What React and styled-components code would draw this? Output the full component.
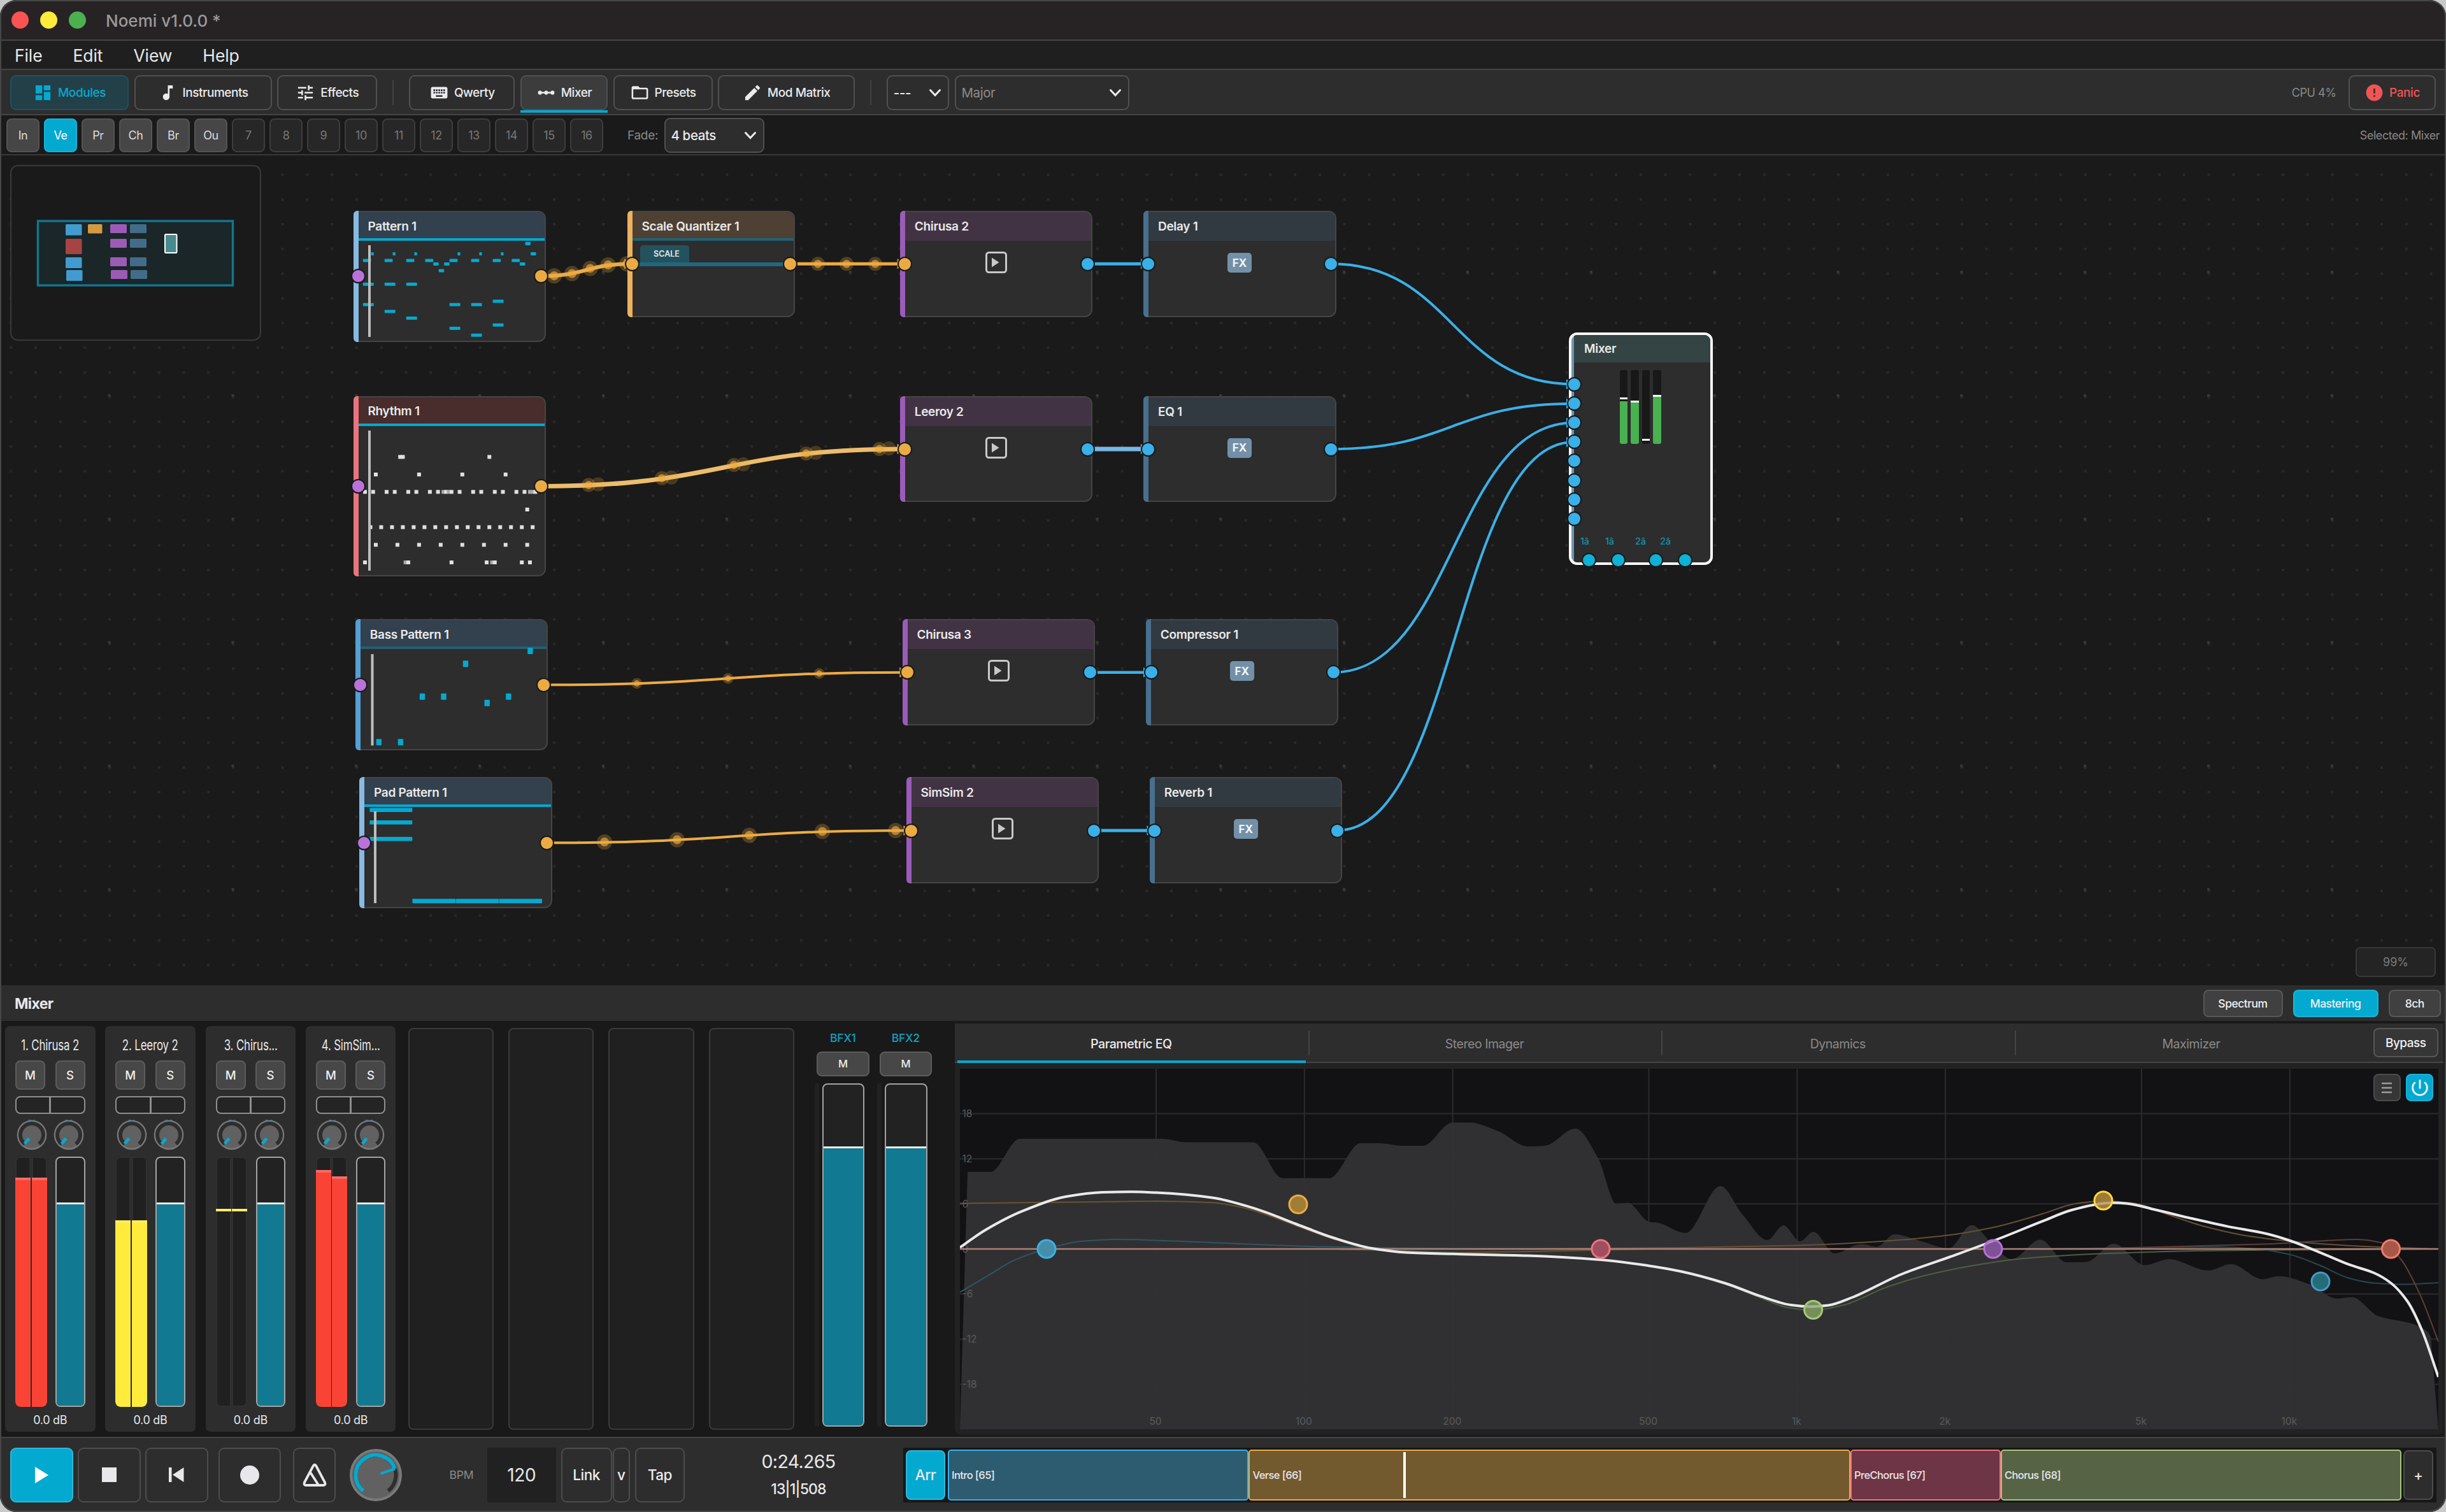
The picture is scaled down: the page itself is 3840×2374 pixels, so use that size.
import styled, { createGlobalStyle } from 'styled-components';
import {
  MdDashboard,
  MdMusicNote,
  MdTune,
  MdKeyboard,
  MdLinearScale,
  MdFolderOpen,
  MdEdit,
  MdError,
  MdPowerSettingsNew,
} from 'react-icons/md';

const GlobalStyle = createGlobalStyle`
  * { box-sizing: border-box; }
  body {
    margin: 0;
    background: #c9c9c9;
    color: #e8e8ea;
    font-family: Inter, 'Liberation Sans', sans-serif;
    overflow: hidden;
  }
  button { font-family: inherit; color: inherit; padding: 0; }
  svg { display: block; flex: none; }
`;

const accent = '#04a9d0';
const blue = '#3ab0e8';
const orange = '#ecab42';
const line = '#444445';

/* ---------- window chrome ---------- */

const Window = styled.div`
  position: relative;
  display: flex;
  flex-direction: column;
  width: 3840px;
  height: 2374px;
  background: #1a1a1a;
  border-radius: 26px;
  overflow: hidden;

  &::after {
    content: '';
    position: absolute;
    inset: 0;
    border: 2px solid #474747;
    border-radius: 26px;
    pointer-events: none;
  }
`;

const TitleBar = styled.div`
  display: flex;
  align-items: center;
  height: 64px;
  padding-left: 18px;
  background: #272324;
  border-bottom: 2px solid #464445;
`;

const Light = styled.span`
  width: 27px;
  height: 27px;
  margin-right: 18px;
  border-radius: 50%;
  background: ${({ $color }) => $color};
`;

const AppTitle = styled.span`
  margin: 2px 0 0 13px;
  font-size: 26px;
  font-weight: 500;
  color: #9a989a;
`;

const MenuBar = styled.div`
  display: flex;
  align-items: center;
  gap: 48px;
  height: 46px;
  padding: 2px 0 0 23px;
  background: #1f1f1f;
  border-bottom: 2px solid ${line};
  font-size: 26.5px;
  letter-spacing: -0.1px;
`;

const Toolbar = styled.div`
  display: flex;
  align-items: center;
  gap: 8.6px;
  height: 71px;
  padding: 2px 16px 0;
  background: #2d2d2d;
  border-bottom: 2px solid ${line};
`;

const ToolButton = styled.button`
  position: relative;
  display: flex;
  align-items: center;
  justify-content: center;
  gap: 8px;
  width: ${({ $w }) => $w}px;
  height: 55px;
  border: 2px solid ${({ $tone }) => ($tone === 'accent' ? '#1f5260' : '#505050')};
  border-radius: 9px;
  background: ${({ $tone }) => ($tone === 'accent' ? '#233f47' : $tone === 'on' ? '#3c3c3c' : '#2d2d2d')};
  color: ${({ $tone }) => ($tone === 'accent' ? accent : $tone === 'danger' ? '#f25454' : '#ebebed')};
  font-size: 19px;
  font-weight: 500;
  letter-spacing: -0.45px;

  svg {
    width: 31px;
    height: 31px;
  }

  &::after {
    content: '';
    display: ${({ $tone }) => ($tone === 'on' ? 'block' : 'none')};
    position: absolute;
    left: -2px;
    right: -2px;
    bottom: -6px;
    height: 4px;
    background: ${accent};
  }
`;

const Divider = styled.span`
  width: 2px;
  height: 39px;
  margin: 0 15.5px;
  background: #424242;
`;

const Select = styled.div`
  display: flex;
  align-items: center;
  justify-content: space-between;
  width: ${({ $w }) => $w}px;
  height: 55px;
  padding: 0 10px 0 8.5px;
  border: 2px solid #505050;
  border-radius: 9px;
  background: #2d2d2d;
  color: ${({ $muted }) => ($muted ? '#8b8b8b' : '#ebebed')};
  font-size: 20.5px;
  font-weight: ${({ $muted }) => ($muted ? 400 : 500)};
  letter-spacing: -0.4px;
`;

const Status = styled.span`
  margin-left: auto;
  margin-right: ${({ $mr }) => $mr || 0}px;
  font-size: 18px;
  letter-spacing: -0.45px;
  color: #898989;
`;

const SceneBar = styled.div`
  display: flex;
  align-items: center;
  gap: 7px;
  height: 63px;
  padding: 2px 10px 0;
  background: #1a1a1a;
  border-bottom: 2px solid #383838;
`;

const SceneButton = styled.button`
  width: 52px;
  height: 53px;
  border: 2px solid ${({ $state }) => ($state === 'active' ? '#18b4da' : $state === 'used' ? '#545454' : '#3d3d3d')};
  border-radius: 8px;
  background: ${({ $state }) => ($state === 'active' ? accent : $state === 'used' ? '#464646' : '#272727')};
  color: ${({ $state }) => ($state === 'active' ? '#fff' : $state === 'used' ? '#dcdcdc' : '#777')};
  font-size: 18px;
  letter-spacing: -0.4px;
`;

const FadeLabel = styled.span`
  width: 51px;
  margin-left: 31px;
  font-size: 19px;
  letter-spacing: -0.3px;
  color: #898989;
`;

const Chevron = () => (
  <svg width='20' height='14' viewBox='0 0 20 14'>
    <path d='M2.5 2.5 10 10.5 17.5 2.5' fill='none' stroke='#ebebed' strokeWidth='3' strokeLinecap='round' />
  </svg>
);

/* ---------- patch canvas ---------- */

const Canvas = styled.div`
  position: relative;
  height: 1303px;
  overflow: hidden;
  background: #1a1a1a;
`;

// node coordinates are window coordinates, the canvas starts below the bars
const World = styled.div`
  position: absolute;
  left: 0;
  top: -244px;
  width: 3840px;
  height: 1547px;
`;

const Wires = styled.svg`
  position: absolute;
  inset: 0;
`;

const NodeBox = styled.div`
  position: absolute;
  left: ${({ $x }) => $x}px;
  top: ${({ $y }) => $y}px;
  width: ${({ $w }) => $w}px;
  height: ${({ $h }) => $h}px;
  border: 2px solid #454545;
  border-left: 0;
  border-radius: 6px 12px 12px 6px;
  background: #2d2d2d;
  overflow: hidden;
`;

const NodeHeader = styled.div`
  display: flex;
  align-items: center;
  height: 45px;
  padding: ${({ $rule }) => ($rule ? 3 : 0)}px 0 0 23px;
  background: ${({ $bg }) => $bg};
  border-bottom: ${({ $rule }) => ($rule ? `4px solid ${$rule}` : '0')};
  font-size: 19px;
  font-weight: 600;
  letter-spacing: -0.3px;
  color: #eaeaea;
  white-space: nowrap;
`;

const Stripe = styled.span`
  position: absolute;
  left: ${({ $x }) => $x}px;
  top: ${({ $y }) => $y}px;
  width: 8px;
  height: ${({ $h }) => $h}px;
  border-radius: 6px 0 0 6px;
  background: ${({ $color }) => $color};
`;

const NodeBody = styled.div`
  display: flex;
  justify-content: center;
  padding: ${({ $pad }) => $pad || 18}px 0 0 1.5px;
`;

const FxBadge = styled.span`
  display: flex;
  align-items: center;
  justify-content: center;
  width: 38px;
  height: 31px;
  margin-top: 1px;
  border-radius: 5px;
  background: #7291a8;
  color: #f2f5f7;
  font-size: 17px;
  font-weight: 700;
`;

const Port = styled.span`
  position: absolute;
  left: ${({ $x }) => $x - 11.5}px;
  top: ${({ $y }) => $y - 11.5}px;
  width: 23px;
  height: 23px;
  border: 2px solid #171a1b;
  border-radius: 50%;
  background: ${({ $color }) => $color};
`;

const NotesLayer = styled.svg`
  position: absolute;
  inset: 0;
`;

const ScaleBadge = styled.span`
  display: flex;
  align-items: center;
  justify-content: center;
  width: 77px;
  height: 27px;
  margin: 7px 0 0 20px;
  padding-left: 7px;
  border-radius: 5px 5px 0 0;
  background: #24515e;
  color: #e3eaec;
  font-size: 12.5px;
  font-weight: 600;
`;

const ScaleBar = styled.span`
  display: block;
  width: 232px;
  height: 6px;
  margin-left: 15px;
  background: #1f6980;
`;

const MixerBox = styled.div`
  position: absolute;
  left: 2463px;
  top: 522px;
  width: 226px;
  height: 365px;
  border: 4px solid #fafafa;
  border-radius: 13px;
  background: linear-gradient(90deg, #6f98b3 4px, #2d2d2d 4px);
  overflow: hidden;
`;

const MixerHead = styled.div`
  display: flex;
  align-items: center;
  height: 43px;
  margin-left: 4px;
  padding-left: 16px;
  background: #344444;
  color: #eaeaea;
  font-size: 19px;
  font-weight: 600;
  letter-spacing: -0.3px;
`;

const MiniMeters = styled.div`
  display: flex;
  gap: 5.2px;
  margin: 12px 0 0 76px;
`;

const MiniMeter = styled.span`
  position: relative;
  width: 12.3px;
  height: 116px;
  border-radius: 3px;
  background: linear-gradient(0deg, #48b150 ${({ $level }) => $level}px, #181818 ${({ $level }) => $level}px);

  &::after {
    content: '';
    position: absolute;
    left: 0;
    right: 0;
    bottom: ${({ $peak }) => $peak}px;
    height: 3px;
    background: #fafafa;
  }
`;

const OutLabels = styled.div`
  position: absolute;
  left: 14px;
  bottom: 25px;
  display: grid;
  grid-template-columns: 39px 47px 39px 40px;
  color: #1492af;
  font-size: 14.5px;
  font-weight: 500;
  letter-spacing: -0.3px;
`;

const MiniMap = styled.div`
  position: absolute;
  left: 16px;
  top: 259px;
  display: flex;
  align-items: center;
  justify-content: center;
  width: 394px;
  height: 276px;
  border: 2px solid #393939;
  border-radius: 12px;
  background: #1a1a1a;
`;

const ZoomBadge = styled.div`
  position: absolute;
  left: 3698px;
  top: 1487px;
  width: 126px;
  height: 47px;
  border: 2px solid #383838;
  border-radius: 7px;
  background: #242424;
  color: #7c7c7c;
  font-size: 18px;
  line-height: 44px;
  text-align: center;
`;

const STEP = 8.49;

// [16th step, row from the top, length]
const PATTERN_NOTES = [
  [30, 0, 1], [1.5, 3, 0.5], [5.5, 3, 0.5], [9.5, 3, 0.5], [17.5, 3, 0.5], [21.5, 3, 0.5], [25.5, 3, 0.5], [31, 3, 1],
  [0, 5, 1.5], [4, 5, 1.5], [8, 5, 1.5], [11.5, 5, 1.5], [16, 5, 1.5], [20, 5, 1.5], [24, 5, 1.5], [27.5, 5, 1.5],
  [13, 6, 1], [15, 6, 1], [29, 6, 1], [14, 8, 1],
  [0, 12, 2], [4, 12, 2], [8, 12, 2], [24, 17, 2], [0, 18, 2], [16, 18, 2], [20, 18, 2],
  [4, 20, 2], [8, 22, 2], [24, 24, 2], [16, 25, 2], [20, 27, 2],
];

const RHYTHM_ROWS = [
  [717.4, [6.5, 7, 23]],
  [745, [2, 10, 18, 26]],
  [772.3, [0, 1.5, 4, 5.5, 8, 9.5, 12, 13.5, 14.5, 15, 15.5, 16, 17.5, 20, 21.5, 24, 25.5, 28, 29.5, 30.5, 31, 31.5]],
  [800, [30]],
  [827.7, [1, 3, 5, 7, 9, 11, 13, 15, 17, 19, 21, 23, 25, 27, 29, 31]],
  [855.4, [2, 6, 10, 14, 18, 22, 26, 30]],
  [883, [0, 7.5, 8, 16, 22.5, 23.5, 24, 29, 30.5]],
];

const DIM_HITS = ['883-7.5', '883-23.5', '772.3-14.5', '772.3-15.5', '772.3-30.5', '772.3-31'];

const BASS_NOTES = [
  [832.4, 1022], [731, 1042.3], [663, 1093.7], [696.5, 1093.7], [798.3, 1093.7],
  [764.7, 1103.8], [594.8, 1165.3], [628.9, 1165.3],
];

const MODULES = [
  { title: 'Pattern 1', kind: 'pattern', x: 554.5, y: 331, w: 302.5, h: 205.5, stripe: '#86bae2', head: '#33404e', rule: accent },
  { title: 'Rhythm 1', kind: 'pattern', x: 554.5, y: 621.5, w: 302.5, h: 283, stripe: '#ea747e', head: '#482d2c', rule: accent },
  { title: 'Bass Pattern 1', kind: 'pattern', x: 557.8, y: 972.3, w: 302.5, h: 205.5, stripe: '#55a0d6', head: '#33404e', rule: '#236073' },
  { title: 'Pad Pattern 1', kind: 'pattern', x: 564, y: 1220, w: 302.5, h: 205.5, stripe: '#86bae2', head: '#33404e', rule: accent },
  { title: 'Scale Quantizer 1', kind: 'scale', x: 984.5, y: 331, w: 263.5, h: 166.5, stripe: '#ecb25e', head: '#4e4033', rule: '#1c6478' },
  { title: 'Chirusa 2', kind: 'synth', x: 1412.7, y: 331 },
  { title: 'Leeroy 2', kind: 'synth', x: 1412.7, y: 621.5 },
  { title: 'Chirusa 3', kind: 'synth', x: 1416.5, y: 972.3 },
  { title: 'SimSim 2', kind: 'synth', x: 1422.5, y: 1220 },
  { title: 'Delay 1', kind: 'fx', x: 1795, y: 331 },
  { title: 'EQ 1', kind: 'fx', x: 1795, y: 621.5 },
  { title: 'Compressor 1', kind: 'fx', x: 1798.8, y: 972.3 },
  { title: 'Reverb 1', kind: 'fx', x: 1804.8, y: 1220 },
];

const KIND_STYLE = {
  synth: { w: 302.5, h: 166.5, stripe: '#9a5cb8', head: '#423344' },
  fx: { w: 302.5, h: 166.5, stripe: '#48708e', head: '#323a41' },
};

const wire = ([x1, y1], [x2, y2]) => {
  const mid = (x1 + x2) / 2;
  return `M${x1} ${y1}C${mid} ${y1} ${mid} ${y2} ${x2} ${y2}`;
};

const WIRES = [
  { from: [849, 433.5], to: [992.5, 414.3], color: orange, width: 6, dots: [[870, 433], [898, 429.5], [926.5, 421.4], [954.6, 416], [984, 414.3]], r: 12 },
  { from: [1240.7, 414.3], to: [1420.7, 414.3], color: orange, width: 5, dots: [[1284, 414.3], [1329, 414.3], [1374, 414.3]], r: 11 },
  { from: [849, 763.4], to: [1420.7, 705], color: '#edbd6c', width: 7, dots: [[924, 761.5], [1039, 750.8], [1152, 730], [1265.6, 712], [1380.5, 705]], r: 11, echo: true },
  { from: [853, 1075.3], to: [1424.5, 1055.7], color: orange, width: 4, dots: [[999.8, 1073], [1143, 1065.3], [1286, 1057.5]], r: 8.5 },
  { from: [858.7, 1323.3], to: [1430.5, 1304], color: orange, width: 4, dots: [[949, 1322], [1063, 1318.5], [1176.4, 1311.4], [1291, 1305.5], [1406, 1304]], r: 12 },
  { from: [1707.6, 414.3], to: [1803, 414.3], color: blue, width: 5 },
  { from: [1707.6, 705], to: [1803, 705], color: '#77b6e4', width: 7 },
  { from: [1711.6, 1055.7], to: [1807, 1055.7], color: blue, width: 4.5 },
  { from: [1717.5, 1304], to: [1812.5, 1304], color: blue, width: 5 },
  { from: [2089.5, 414.3], to: [2471, 603.3], color: blue, width: 4 },
  { from: [2089.5, 705], to: [2471, 633.7], color: blue, width: 4 },
  { from: [2093, 1055.7], to: [2471, 663.7], color: blue, width: 4 },
  { from: [2099, 1304], to: [2471, 694], color: blue, width: 4 },
];

const PURPLE = '#ba72d8';

const PORTS = [
  [562, 433.5, PURPLE], [562, 763.4, PURPLE], [565.8, 1075.3, PURPLE], [571.5, 1323.3, PURPLE],
  [849, 433.5, orange], [849, 763.4, orange], [853, 1075.3, orange], [858.7, 1323.3, orange],
  [992.4, 414.3, orange], [1240.7, 414.3, orange],
  [1420.7, 414.3, orange], [1420.7, 705, orange], [1424.5, 1055.7, orange], [1430.5, 1304, orange],
  [1707.6, 414.3, blue], [1707.6, 705, blue], [1711.6, 1055.7, blue], [1717.5, 1304, blue],
  [1802.5, 414.3, blue], [1802.5, 705, blue], [1807, 1055.7, blue], [1812.5, 1304, blue],
  [2089.3, 414.3, blue], [2089.3, 705, blue], [2093, 1055.7, blue], [2099, 1304, blue],
  ...[0, 1, 2, 3, 4, 5, 6, 7].map((i) => [2471, 603.3 + i * 30.15, blue]),
  [2494.3, 879.3, '#0fb1d6'], [2540.7, 879.3, '#0fb1d6'], [2599, 879.3, '#0fb1d6'], [2645.3, 879.3, '#0fb1d6'],
];

const PlayBox = () => (
  <svg width='34' height='34' viewBox='0 0 34 34'>
    <rect x='1.5' y='1.5' width='31' height='31' rx='4' fill='none' stroke='#c8c8c8' strokeWidth='3' />
    <path d='M10 9.5 21.5 17 10 24.5z' fill='#c8c8c8' />
  </svg>
);

const ModuleNode = ({ module }) => {
  const { title, kind, x, y, w, h, stripe, head, rule } = { ...KIND_STYLE[module.kind], ...module };
  return (
    <>
      <NodeBox $x={x} $y={y} $w={w} $h={h}>
        <NodeHeader $bg={head} $rule={rule}>{title}</NodeHeader>
        {kind === 'synth' && (
          <NodeBody $pad={17}>
            <PlayBox />
          </NodeBody>
        )}
        {kind === 'fx' && (
          <NodeBody>
            <FxBadge>FX</FxBadge>
          </NodeBody>
        )}
        {kind === 'scale' && (
          <>
            <ScaleBadge>SCALE</ScaleBadge>
            <ScaleBar />
          </>
        )}
      </NodeBox>
      <Stripe $x={x} $y={y} $h={h} $color={stripe} />
    </>
  );
};

const PatternNotes = () => (
  <NotesLayer width='3840' height='1547'>
    <g fill={accent}>
      {PATTERN_NOTES.map(([s, row, len]) => (
        <rect key={`${s}-${row}`} x={569.8 + s * STEP} y={380 + row * 5.32} width={len * STEP} height='5' rx='1' />
      ))}
      {BASS_NOTES.map(([cx, cy]) => (
        <rect key={cx} x={cx - 4.2} y={cy - 5} width='8.4' height='10' rx='1' />
      ))}
      <rect x='580.3' y='1268.5' width='67' height='6.5' rx='1' />
      <rect x='580.3' y='1288' width='67' height='6.5' rx='1' />
      <rect x='580.3' y='1314' width='67' height='6.5' rx='1' />
      {[647.5, 715.5, 783.5].map((nx) => (
        <rect key={nx} x={nx} y='1411.3' width='67.5' height='7' rx='1' />
      ))}
    </g>
    {RHYTHM_ROWS.map(([y, steps]) =>
      steps.map((s) => (
        <rect
          key={`${y}-${s}`}
          x={570 + s * STEP}
          y={y - 3}
          width='6'
          height='6'
          fill={DIM_HITS.includes(`${y}-${s}`) ? '#a8a8a8' : '#e0e0e0'}
        />
      ))
    )}
    <g fill='#bdbdbd'>
      <rect x='578' y='385' width='4' height='144' />
      <rect x='578' y='676' width='4' height='220' />
      <rect x='582.5' y='1027' width='4' height='143.5' />
      <rect x='587' y='1274' width='4' height='144' />
    </g>
  </NotesLayer>
);

const MAP_BLOCKS = [
  [103, 352, 25.5, 17.5, '#429bd0'], [138, 352, 22.5, 14.5, '#d39a42'], [173, 352, 26, 14, '#9c5bb4'], [204, 352, 26, 14, '#426c8a'],
  [103, 375, 25.5, 24, '#a64444'], [173, 375, 26, 14, '#9c5bb4'], [204, 375, 26, 14, '#426c8a'],
  [103, 404, 25.5, 17, '#429bd0'], [173, 404, 26, 14, '#9c5bb4'], [204, 404, 26, 14, '#426c8a'],
  [104, 424, 25.5, 17, '#429bd0'], [174, 424, 26, 14, '#9c5bb4'], [205, 424, 26, 14, '#426c8a'],
];

const PatchCanvas = () => (
  <Canvas>
    <World>
      <Wires width='3840' height='1547'>
        <defs>
          <pattern id='dots' x='15.1' y='1.1' width='38.77' height='38.77' patternUnits='userSpaceOnUse'>
            <rect width='4' height='4' fill='#292929' />
          </pattern>
          <pattern id='majorDots' x='169.6' y='37.4' width='193.85' height='193.85' patternUnits='userSpaceOnUse'>
            <rect width='4' height='4' fill='#383838' />
          </pattern>
        </defs>
        <rect y='244' width='3840' height='1303' fill='url(#dots)' />
        <rect y='244' width='3840' height='1303' fill='url(#majorDots)' />
        {WIRES.map(({ from, to, color, width, dots = [], r, echo }) => (
          <g key={`${from}`}>
            <path d={wire(from, to)} fill='none' stroke={color} strokeWidth={width} />
            <path d={`M${to[0] - 12} ${to[1] - 8}v16l12 -8z`} fill={color} />
            {dots.map(([cx, cy]) => (
              <g key={cx} fill={orange}>
                {echo && <circle cx={cx + 15} cy={cy - 1} r={r} fillOpacity='0.22' />}
                <circle cx={cx} cy={cy} r={r} fillOpacity='0.27' />
                <circle cx={cx} cy={cy} r={r * 0.58} fillOpacity='0.65' />
              </g>
            ))}
          </g>
        ))}
      </Wires>
      {MODULES.map((m) => (
        <ModuleNode key={m.title} module={m} />
      ))}
      <PatternNotes />
      <MixerBox>
        <MixerHead>Mixer</MixerHead>
        <MiniMeters>
          <MiniMeter $level={67.5} $peak={70.5} />
          <MiniMeter $level={65} $peak={65} />
          <MiniMeter $level={0} $peak={5} />
          <MiniMeter $level={74} $peak={74} />
        </MiniMeters>
        <OutLabels>
          <span>1â</span>
          <span>1â</span>
          <span>2â</span>
          <span>2â</span>
        </OutLabels>
      </MixerBox>
      {PORTS.map(([x, y, color]) => (
        <Port key={`${x}-${y}`} $x={x} $y={y} $color={color} />
      ))}
      <MiniMap>
        <svg width='390' height='272' viewBox='18 261 390 272'>
          <rect x='59.5' y='347' width='306' height='101' fill='#1a2628' stroke='#14758c' strokeWidth='3.5' />
          {MAP_BLOCKS.map(([x, y, w, h, fill]) => (
            <rect key={`${x}-${y}`} x={x} y={y} width={w} height={h} rx='1.5' fill={fill} />
          ))}
          <rect x='259' y='368' width='18.5' height='29' rx='1.5' fill='#478b90' stroke='#fff' strokeWidth='2' />
        </svg>
      </MiniMap>
      <ZoomBadge>99%</ZoomBadge>
    </World>
  </Canvas>
);

/* ---------- mixer panel ---------- */

const MixerBar = styled.div`
  display: flex;
  align-items: center;
  gap: 16px;
  height: 56px;
  padding: 1px 8px 0 23px;
  background: #2d2d2d;
`;

const PanelTitle = styled.span`
  margin-right: auto;
  font-size: 23px;
  font-weight: 700;
  letter-spacing: -0.6px;
`;

const PanelButton = styled.button`
  width: ${({ $w }) => $w}px;
  height: ${({ $h }) => $h || 43}px;
  margin-left: ${({ $ml }) => $ml || 0}px;
  border: 2px solid ${({ $active }) => ($active ? '#1cb4d8' : '#575757')};
  border-radius: 8px;
  background: ${({ $active, $dark }) => ($active ? accent : $dark ? '#363636' : '#404040')};
  color: #f0f0f0;
  font-size: ${({ $size }) => $size || 17.5}px;
  font-weight: 500;
  letter-spacing: -0.5px;
`;

const MixerArea = styled.div`
  display: flex;
  height: 653px;
  padding: 4px 4px 0 8px;
  background: #191919;
`;

const Strips = styled.div`
  display: flex;
  gap: 15.8px;
  padding-top: 4px;
`;

const Strip = styled.div`
  width: 141.5px;
  height: 637px;
  padding: 0 16px;
  border-radius: 7px;
  background: #2d2d2d;
`;

const EmptyStrip = styled.div`
  width: 134.5px;
  height: 631px;
  margin: 3px 3.5px;
  border: 2px solid #3a3a3a;
  border-radius: 8px;
  background: #202020;
`;

const StripName = styled.div`
  display: flex;
  align-items: center;
  justify-content: center;
  height: 53.5px;
  padding-top: 5px;
  font-size: 22.5px;
  letter-spacing: -0.2px;
  white-space: nowrap;
  transform: scaleX(0.75);
`;

const StripButtons = styled.div`
  display: flex;
  justify-content: space-between;
`;

const StripButton = styled.button`
  width: ${({ $w }) => $w || 47}px;
  height: ${({ $h }) => $h || 46.5}px;
  border: 2px solid #5c5c5c;
  border-radius: 8px;
  background: #474747;
  color: #eee;
  font-size: ${({ $size }) => $size || 18.5}px;
  font-weight: 500;
`;

const Pan = styled.div`
  display: flex;
  justify-content: center;
  height: 27.5px;
  margin-top: 10px;
  border: 2px solid #8e8e8e;
  border-radius: 8px;
  background: #242424;

  &::after {
    content: '';
    width: 3px;
    background: #8e8e8e;
  }
`;

const Sends = styled.div`
  display: flex;
  gap: 10.5px;
  height: 67.5px;
  padding: 9.5px 0 0 1.5px;
`;

// the knob sits on top of its label, only the label's top edge stays visible
const Send = styled.div`
  position: relative;
  width: 48px;
  height: 48px;

  svg {
    position: relative;
  }
`;

const SendLabel = styled.span`
  position: absolute;
  left: 0;
  right: 0;
  top: -2px;
  color: #137d99;
  font-size: 11px;
  font-weight: 600;
  line-height: 12px;
  text-align: center;
`;

const Levels = styled.div`
  display: flex;
  gap: 13.5px;
  height: 392.5px;
`;

const Meter = styled.div`
  display: grid;
  grid-template-columns: 1fr 1fr;
  gap: 1.5px;
  width: 49.5px;
  border-radius: 8px;
  overflow: hidden;
`;

const MeterBar = styled.div`
  position: relative;
  display: flex;
  align-items: flex-end;
  background: #202020;
  box-shadow: inset 0 0 0 2px #303030;
  border-radius: ${({ $right }) => ($right ? '0 8px 8px 0' : '8px 0 0 8px')};
  overflow: hidden;
`;

const MeterFill = styled.div`
  width: 100%;
  height: ${({ $h }) => $h}px;
  background: ${({ $color }) => $color};
  border-top: 4px solid ${({ $cap }) => $cap};
`;

const PeakHold = styled.span`
  position: absolute;
  left: 0;
  right: 0;
  top: 81.5px;
  height: 4.5px;
  background: #ffec6a;
`;

const Fader = styled.div`
  width: ${({ $w }) => $w || 46.5}px;
  height: ${({ $h }) => $h || 392.5}px;
  padding-top: ${({ $top }) => $top || 70}px;
  border: 2px solid #a4a4a4;
  border-radius: 8px;
  background: #222;
  overflow: hidden;

  &::after {
    content: '';
    display: block;
    height: 100%;
    border-top: 3px solid #eee;
    background: #117991;
  }
`;

const Db = styled.div`
  height: 39px;
  font-size: 18px;
  line-height: 42px;
  letter-spacing: -0.3px;
  text-align: center;
  white-space: nowrap;
`;

const Buses = styled.div`
  display: flex;
  gap: 12px;
  margin-left: 28px;
`;

const Bus = styled.div`
  display: flex;
  flex-direction: column;
  align-items: center;
  width: 86.5px;

  button {
    margin-left: 3.5px;
  }
`;

const BusName = styled.div`
  height: 43.5px;
  padding-left: 3px;
  font-size: 17.5px;
  font-weight: 500;
  line-height: 45px;
  letter-spacing: -0.2px;
  color: #12a0c0;
`;

const BusLevels = styled.div`
  display: flex;
  gap: 5px;
  width: 100%;
  height: 539px;
  margin-top: 11px;
`;

const BusMeter = styled.span`
  width: 7px;
  border-radius: 3px;
  background: #212121;
`;

const RED = { color: '#f94435', cap: '#f46c68' };
const YELLOW = { color: '#ffeb3b', cap: '#ffee5c' };

const CHANNELS = [
  { name: '1. Chirusa 2', levels: [359.5, 359.5], tone: RED },
  { name: '2. Leeroy 2', levels: [292.5, 292.5], tone: YELLOW },
  { name: '3. Chirus...', levels: null },
  { name: '4. SimSim...', levels: [371.5, 361.5], tone: RED },
];

const polar = (c, r, deg) => {
  const a = ((deg - 90) * Math.PI) / 180;
  return [c + r * Math.cos(a), c + r * Math.sin(a)];
};

const arc = (c, r, from, to) => {
  const [x1, y1] = polar(c, r, from);
  const [x2, y2] = polar(c, r, to);
  return `M${x1} ${y1}A${r} ${r} 0 ${to - from > 180 ? 1 : 0} 1 ${x2} ${y2}`;
};

const Knob = ({ size, value, track, width, ring }) => {
  const c = size / 2;
  const [px, py] = polar(c, track, value);
  const [ix, iy] = polar(c, ring ? 8 : 7, value);
  return (
    <svg width={size} height={size}>
      <circle cx={c} cy={c} r={c - 2} fill='#616161' stroke='#7a7a7a' strokeWidth={ring ? 4 : 2.5} />
      <path d={arc(c, track, -142, 142)} fill='none' stroke='#2e2e2e' strokeWidth={width} />
      {value > -140 && <path d={arc(c, track, -142, value)} fill='none' stroke={accent} strokeWidth={width} />}
      <path d={`M${ix} ${iy}L${px} ${py}`} stroke={accent} strokeWidth={ring ? 4 : 5} />
    </svg>
  );
};

const ChannelStrip = ({ channel }) => (
  <Strip>
    <StripName>{channel.name}</StripName>
    <StripButtons>
      <StripButton>M</StripButton>
      <StripButton>S</StripButton>
    </StripButtons>
    <Pan />
    <Sends>
      {['B1', 'B2'].map((b) => (
        <Send key={b}>
          <SendLabel>{b}</SendLabel>
          <Knob size={48} value={-141} track={18} width={6} />
        </Send>
      ))}
    </Sends>
    <Levels>
      <Meter>
        {[0, 1].map((i) => (
          <MeterBar key={i} $right={i === 1}>
            {channel.levels ? (
              <MeterFill $h={channel.levels[i]} $color={channel.tone.color} $cap={channel.tone.cap} />
            ) : (
              <PeakHold />
            )}
          </MeterBar>
        ))}
      </Meter>
      <Fader />
    </Levels>
    <Db>0.0 dB</Db>
  </Strip>
);

/* ---------- mastering eq ---------- */

const Mastering = styled.div`
  display: flex;
  flex-direction: column;
  width: 2337px;
  height: 645.5px;
  margin-left: auto;
  border-radius: 0 0 10px 10px;
  background: #222;
`;

const Tabs = styled.div`
  display: flex;
  align-items: center;
  height: 62px;
  padding-left: 2px;
  background: #2d2d2d;
  border-bottom: 2px solid #464646;
`;

const Tab = styled.div`
  position: relative;
  width: 554.7px;
  height: 39px;
  padding-right: 3px;
  font-size: 19.5px;
  font-weight: ${({ $active }) => ($active ? 500 : 400)};
  letter-spacing: -0.45px;
  line-height: 42px;
  text-align: center;
  color: ${({ $active }) => ($active ? '#ededed' : '#8a8a8a')};
  border-right: 2px solid ${({ $last }) => ($last ? 'transparent' : '#444')};

  &::after {
    content: '';
    display: ${({ $active }) => ($active ? 'block' : 'none')};
    position: absolute;
    left: 2px;
    right: 4px;
    bottom: -12px;
    height: 4px;
    background: ${accent};
  }
`;

const Plot = styled.div`
  position: relative;
  margin: 9px 0 0 8px;
  width: 2321px;
  height: 566px;
  background: #121214;
`;

const PlotTools = styled.div`
  position: absolute;
  top: 8px;
  right: 8px;
  display: flex;
  gap: 8.5px;
`;

const PlotButton = styled.button`
  display: flex;
  align-items: center;
  justify-content: center;
  width: 43px;
  height: 43px;
  border: 2px solid ${({ $active }) => ($active ? '#18b2d8' : '#4c4c4c')};
  border-radius: 8px;
  background: ${({ $active }) => ($active ? accent : '#363636')};
  color: #f4f4f4;
`;

// monotone cubic through the points, flat where the direction changes
const spline = (pts) => {
  const n = pts.length;
  const d = [];
  for (let i = 0; i < n - 1; i++) {
    d.push((pts[i + 1][1] - pts[i][1]) / (pts[i + 1][0] - pts[i][0]));
  }
  const m = pts.map((_, i) => {
    if (i === 0) return d[0];
    if (i === n - 1) return d[n - 2];
    return d[i - 1] * d[i] <= 0 ? 0 : (2 * d[i - 1] * d[i]) / (d[i - 1] + d[i]);
  });
  let path = `L${pts[0][0]} ${pts[0][1]}`;
  for (let i = 0; i < n - 1; i++) {
    const [x0, y0] = pts[i];
    const [x1, y1] = pts[i + 1];
    const h = (x1 - x0) / 3;
    path += `C${x0 + h} ${y0 + m[i] * h} ${x1 - h} ${y1 - m[i + 1] * h} ${x1} ${y1}`;
  }
  return path;
};

const curve = (pts) => `M${pts[0][0]} ${pts[0][1]}${spline(pts)}`;

const SPECTRUM = [
  [1519, 1840], [1555, 1840], [1601, 1788], [1824, 1788], [1863, 1793.6], [1967.5, 1793.6], [2013.4, 1849.8],
  [2087, 1849.8], [2136, 1795], [2165, 1795], [2203, 1799], [2234, 1799], [2280, 1762.6], [2306.5, 1762.6],
  [2352, 1776], [2398.4, 1800], [2425, 1799], [2473.4, 1772], [2509, 1818.8], [2537.6, 1890.4], [2555, 1888.5],
  [2590, 1918.7], [2601, 1919.5], [2646.3, 1936], [2701, 1862.3], [2735.7, 1907], [2774.7, 1947], [2800, 1924],
  [2826, 1949], [2846.6, 1934], [2880.3, 1968], [2921.6, 1953.3], [2946, 1957.5], [2974.4, 1938], [3015, 1948.5],
  [3059.4, 1960], [3095.3, 1923.5], [3126.7, 1952], [3158, 1977], [3203, 1946.4], [3244.6, 1982], [3275, 1981.5],
  [3318.8, 1952.8], [3367, 1986.5], [3405.3, 1977], [3466.5, 1994.8], [3502.5, 1984.7], [3552, 2008.5],
  [3577.5, 2003.8], [3627, 2017], [3669.3, 2039], [3692, 2036.8], [3734, 2066.6], [3788, 2078.8], [3811, 2090.5], [3816, 2098.5],
];

const SUM = [
  [1507, 1958.6], [1547.4, 1931], [1604.8, 1901.7], [1673.7, 1878.8], [1731, 1872], [1775, 1871.2], [1815, 1872.6],
  [1903, 1880.4], [1966.5, 1896.4], [2047, 1926.5], [2092, 1943], [2153.5, 1960], [2207, 1966.5], [2280.5, 1968.8],
  [2398, 1971.5], [2513, 1978], [2587.4, 1987.2], [2640, 1996.5], [2709, 2015], [2762.4, 2034.7], [2812, 2049],
  [2841, 2051.5], [2870, 2049.5], [2908, 2037], [2984.4, 2001], [3061, 1973.5], [3129, 1948.5], [3206, 1917.7],
  [3252, 1900], [3302, 1889.5], [3318, 1888.6], [3340, 1889.8], [3382, 1899], [3436, 1912], [3497, 1925.6], [3558, 1937],
  [3596.6, 1948.5], [3642.5, 1966.6], [3688.4, 1985.7], [3726.7, 1998.5], [3753.5, 2014.5], [3780, 2044],
  [3803, 2090.5], [3828, 2162],
];

const BANDS = [
  { color: '#2f5564', pts: [[1507, 2029], [1553, 2001.7], [1593, 1978.3], [1659, 1956.5], [1697, 1949], [1754, 1945.9], [1815, 1947.4], [1926, 1952], [2080, 1957.6], [2300, 1960.5], [2600, 1961]] },
  { color: '#6d532d', pts: [[1507, 1889.5], [1700, 1887.3], [1815, 1886], [1903, 1888.3], [1955, 1897], [2001, 1911.8], [2047, 1929], [2092, 1945], [2160, 1962], [2230, 1967], [2400, 1965], [2587, 1961]] },
  { color: '#505e43', pts: [[2092, 1961], [2203, 1964], [2398, 1971], [2513, 1978], [2640, 1996.5], [2709, 2016.5], [2762, 2037], [2808, 2053.3], [2846, 2057], [2892, 2049.6], [2961, 2021.4], [3022, 2002.8], [3099, 1986.8], [3176, 1976], [3290, 1968.7], [3482, 1963.4], [3828, 1961]] },
  { color: '#655036', pts: [[2400, 1961], [2640, 1959], [2821, 1955.5], [2946, 1949.6], [3054, 1940], [3130, 1927], [3206, 1906], [3260, 1889.5], [3302, 1885.7], [3352, 1889.5], [3405, 1907.6], [3466, 1927], [3535, 1941.6], [3620, 1951], [3711, 1957], [3828, 1961]] },
  { color: '#28474e', pts: [[3200, 1961], [3482, 1958], [3543, 1961], [3595, 1969.8], [3642, 1986.8], [3688, 2007], [3727, 2014.5], [3772, 2016.6], [3828, 2014]] },
  { color: '#5d3d37', pts: [[3300, 1960], [3558, 1953.3], [3635, 1949], [3700, 1945.9], [3742, 1952], [3769, 1977], [3799, 2032], [3828, 2106.5]] },
];

const HANDLES = [
  { x: 1643, y: 1961, stroke: '#3ab0e8', fill: '#468ea8' },
  { x: 2038, y: 1891, stroke: '#ecab42', fill: '#a17e38' },
  { x: 2513, y: 1961, stroke: '#ee7280', fill: '#a04e60' },
  { x: 2846.6, y: 2056.5, stroke: '#a5c878', fill: '#76905a' },
  { x: 3129, y: 1961, stroke: '#b870d8', fill: '#7f5196' },
  { x: 3302, y: 1885, stroke: '#ffd83c', fill: '#a07c35' },
  { x: 3643, y: 2012, stroke: '#4898c4', fill: '#256c78' },
  { x: 3753.5, y: 1961, stroke: '#f07c6a', fill: '#a85849' },
];

const DB_LINES = [18, 12, 6, 0, -6, -12, -18];
const FREQS = [
  [50, '50'], [100, '100'], [200, '200'], [500, '500'], [1000, '1k'], [2000, '2k'], [5000, '5k'], [10000, '10k'],
];

const freqX = (f) => 1507.2 + 773.5 * Math.log10(f / 20);
const dbY = (db) => 1961 - db * 11.8;

const EqPlot = () => (
  <svg width='2321' height='566' viewBox='1507 1678 2321 566' fontSize='15.5'>
    <g stroke='#2b2b2d' strokeWidth='2'>
      {DB_LINES.map((db) => (
        <line key={db} x1='1507' x2='3828' y1={dbY(db)} y2={dbY(db)} />
      ))}
      {FREQS.map(([f]) => (
        <line key={f} x1={freqX(f)} x2={freqX(f)} y1='1678' y2='2244' />
      ))}
    </g>
    <path d={`M1507 2244${spline(SPECTRUM)}L3828 2244z`} fill='#323234' fillOpacity='0.94' />
    <g fill='#5a5a5c'>
      {DB_LINES.map((db) => (
        <text key={db} x='1510.5' y={dbY(db) + 5.5}>{db}</text>
      ))}
      {FREQS.map(([f, label]) => (
        <text key={f} x={freqX(f) - 1} y='2236.5' textAnchor='middle'>{label}</text>
      ))}
    </g>
    {BANDS.map(({ color, pts }) => (
      <path key={color} d={curve(pts)} fill='none' stroke={color} strokeWidth='2' />
    ))}
    <line x1='1507' x2='3828' y1='1961' y2='1961' stroke='#ad8078' strokeWidth='2.5' />
    {HANDLES.map(({ x, y, fill }) => (
      <circle key={x} cx={x} cy={y} r='14' fill={fill} />
    ))}
    <path d={curve(SUM)} fill='none' stroke='#e9e9ea' strokeWidth='4' />
    {HANDLES.map(({ x, y, stroke, fill }) => (
      <circle key={x} cx={x} cy={y} r='14' fill={fill} fillOpacity='0.6' stroke={stroke} strokeWidth='3' />
    ))}
  </svg>
);

const MixerPanel = () => (
  <>
    <MixerBar>
      <PanelTitle>Mixer</PanelTitle>
      <PanelButton $w={125}>Spectrum</PanelButton>
      <PanelButton $w={134} $active>Mastering</PanelButton>
      <PanelButton $w={82.5}>8ch</PanelButton>
    </MixerBar>
    <MixerArea>
      <Strips>
        {CHANNELS.map((c) => (
          <ChannelStrip key={c.name} channel={c} />
        ))}
        {[5, 6, 7, 8].map((n) => (
          <EmptyStrip key={n} />
        ))}
      </Strips>
      <Buses>
        {['BFX1', 'BFX2'].map((b) => (
          <Bus key={b}>
            <BusName>{b}</BusName>
            <StripButton $w={82.5} $h={39} $size={16.5}>M</StripButton>
            <BusLevels>
              <BusMeter />
              <Fader $w={66.5} $h={539} $top={97.5} />
            </BusLevels>
          </Bus>
        ))}
      </Buses>
      <Mastering>
        <Tabs>
          <Tab $active>Parametric EQ</Tab>
          <Tab>Stereo Imager</Tab>
          <Tab>Dynamics</Tab>
          <Tab $last>Maximizer</Tab>
          <PanelButton $w={102} $h={46} $ml={6} $size={19} $dark>Bypass</PanelButton>
        </Tabs>
        <Plot>
          <EqPlot />
          <PlotTools>
            <PlotButton>
              <svg width='18' height='18'>
                <path d='M1 2h16M1 9h16M1 16h16' stroke='#9c9c9c' strokeWidth='2.4' />
              </svg>
            </PlotButton>
            <PlotButton $active>
              <MdPowerSettingsNew size={34} />
            </PlotButton>
          </PlotTools>
        </Plot>
      </Mastering>
    </MixerArea>
  </>
);

/* ---------- transport ---------- */

const TransportBar = styled.div`
  display: flex;
  align-items: center;
  height: 118px;
  padding: 0 15px 1px 16px;
  background: #2d2d2d;
  border-top: 2px solid ${line};
`;

const TransportButton = styled.button`
  display: flex;
  align-items: center;
  justify-content: center;
  width: ${({ $w }) => $w || 98.5}px;
  height: 86px;
  margin-right: ${({ $gap }) => $gap ?? 7.5}px;
  border: 2px solid ${({ $active }) => ($active ? '#2cb8dc' : '#4c4c4c')};
  border-radius: 9px;
  background: ${({ $active }) => ($active ? accent : '#2d2d2d')};
  color: #ececee;
  font-size: 22.5px;
  font-weight: 500;
  letter-spacing: -0.5px;
`;

const BpmLabel = styled.span`
  width: 59px;
  margin-left: 75px;
  font-size: 17.5px;
  letter-spacing: -0.2px;
  color: #8a8a8a;
`;

const BpmValue = styled.div`
  width: 108.5px;
  height: 86px;
  margin-right: 7.5px;
  background: #212121;
  font-size: 28px;
  line-height: 86px;
  letter-spacing: -0.4px;
  text-align: center;
`;

const Clock = styled.div`
  display: flex;
  flex-direction: column;
  align-items: center;
  gap: 11px;
  width: 200px;
  margin: 0 64px 0 79px;
`;

const Time = styled.span`
  font-size: 28.5px;
  line-height: 34px;
  letter-spacing: -0.65px;
`;

const Bars = styled.span`
  font-size: 23px;
  font-weight: 500;
  line-height: 30px;
  letter-spacing: -0.8px;
`;

const Arrangement = styled.div`
  display: flex;
  align-items: center;
  flex: 1;
  height: 86px;
  padding: 0 4px;
  background: #171717;
`;

const Section = styled.div`
  display: flex;
  align-items: center;
  justify-content: ${({ $center }) => ($center ? 'center' : 'flex-start')};
  position: relative;
  width: ${({ $w }) => $w}px;
  height: ${({ $h }) => $h || 80}px;
  margin-right: ${({ $gap }) => $gap || 0}px;
  padding-left: ${({ $center }) => ($center ? 0 : 4.5)}px;
  border: 2px solid ${({ $edge }) => $edge};
  border-radius: ${({ $center }) => ($center ? 8 : 5)}px;
  background: ${({ $bg }) => $bg};
  font-size: ${({ $size }) => $size || 16.5}px;
  font-weight: 500;
  letter-spacing: -0.6px;
`;

const Playhead = styled.span`
  position: absolute;
  left: 240.5px;
  top: 2px;
  width: 4px;
  height: 72px;
  background: #fff;
`;

const Transport = () => (
  <TransportBar>
    <TransportButton $active>
      <svg width='26' height='26'>
        <path d='M3 0 24 13 3 26z' fill='#fff' />
      </svg>
    </TransportButton>
    <TransportButton>
      <svg width='23' height='23'>
        <rect width='23' height='23' fill='#e8e8ea' />
      </svg>
    </TransportButton>
    <TransportButton $gap={16}>
      <svg width='24' height='23'>
        <path d='M0 0h4.5v23H0zM23.5 0v23L6 11.5z' fill='#e8e8ea' />
      </svg>
    </TransportButton>
    <TransportButton $gap={19}>
      <svg width='30' height='30'>
        <circle cx='15' cy='15' r='15' fill='#e8e8ea' />
      </svg>
    </TransportButton>
    <TransportButton $w={67} $gap={21.5}>
      <svg width='38' height='38' viewBox='0 0 38 38' fill='none' stroke='#e8e8ea' strokeWidth='3.8' strokeLinejoin='round' strokeLinecap='round'>
        <path d='M16.8 4.5Q19 1 21.2 4.5L35 30.5Q36.5 34.8 33 35H5Q1.500 34.800 3 30.5z' />
        <path d='M12 14.5 24.5 34' strokeLinecap='butt' />
      </svg>
    </TransportButton>
    <Knob size={82} value={72} track={31.5} width={6} ring />
    <BpmLabel>BPM</BpmLabel>
    <BpmValue>120</BpmValue>
    <TransportButton $w={80} $gap={1.5}>Link</TransportButton>
    <TransportButton $w={26.5} $gap={8.5}>v</TransportButton>
    <TransportButton $w={77.5} $gap={0}>Tap</TransportButton>
    <Clock>
      <Time>0:24.265</Time>
      <Bars>13|1|508</Bars>
    </Clock>
    <Arrangement>
      <Section $center $w={62.5} $h={78} $gap={3.5} $bg={accent} $edge='#2cb8dc' $size={23}>Arr</Section>
      <Section $w={472.5} $bg='#2d5c70' $edge={blue}>Intro [65]</Section>
      <Section $w={944.5} $bg='#73592e' $edge={orange}>
        Verse [66]
        <Playhead />
      </Section>
      <Section $w={236} $bg='#6e3546' $edge='#ee7280'>PreChorus [67]</Section>
      <Section $w={629} $gap={3.5} $bg='#566445' $edge='#a5c878'>Chorus [68]</Section>
      <Section $center $w={46.5} $h={78} $bg='#2d2d2d' $edge='#4c4c4c' $size={22}>+</Section>
    </Arrangement>
  </TransportBar>
);

const SCENES = ['In', 'Ve', 'Pr', 'Ch', 'Br', 'Ou', 7, 8, 9, 10, 11, 12, 13, 14, 15, 16];

const sceneState = (i) => (i === 1 ? 'active' : i < 6 ? 'used' : 'empty');

const App = () => (
  <>
    <GlobalStyle />
    <Window>
      <TitleBar>
        <Light $color='#fa5353' />
        <Light $color='#ffeb3b' />
        <Light $color='#4caf50' />
        <AppTitle>Noemi v1.0.0 *</AppTitle>
      </TitleBar>
      <MenuBar>
        <span>File</span>
        <span>Edit</span>
        <span>View</span>
        <span>Help</span>
      </MenuBar>
      <Toolbar>
        <ToolButton $w={186} $tone='accent'><MdDashboard />Modules</ToolButton>
        <ToolButton $w={216}><MdMusicNote />Instruments</ToolButton>
        <ToolButton $w={157}><MdTune />Effects</ToolButton>
        <Divider />
        <ToolButton $w={166}><MdKeyboard />Qwerty</ToolButton>
        <ToolButton $w={137} $tone='on'><MdLinearScale />Mixer</ToolButton>
        <ToolButton $w={156}><MdFolderOpen />Presets</ToolButton>
        <ToolButton $w={215}><MdEdit />Mod Matrix</ToolButton>
        <Divider />
        <Select $w={98}>---<Chevron /></Select>
        <Select $w={274} $muted>Major<Chevron /></Select>
        <Status $mr={11}>CPU 4%</Status>
        <ToolButton $w={137} $tone='danger'><MdError />Panic</ToolButton>
      </Toolbar>
      <SceneBar>
        {SCENES.map((s, i) => (
          <SceneButton key={s} $state={sceneState(i)}>{s}</SceneButton>
        ))}
        <FadeLabel>Fade:</FadeLabel>
        <Select $w={157}>4 beats<Chevron /></Select>
        <Status>Selected: Mixer</Status>
      </SceneBar>
      <PatchCanvas />
      <MixerPanel />
      <Transport />
    </Window>
  </>
);

export default App;
